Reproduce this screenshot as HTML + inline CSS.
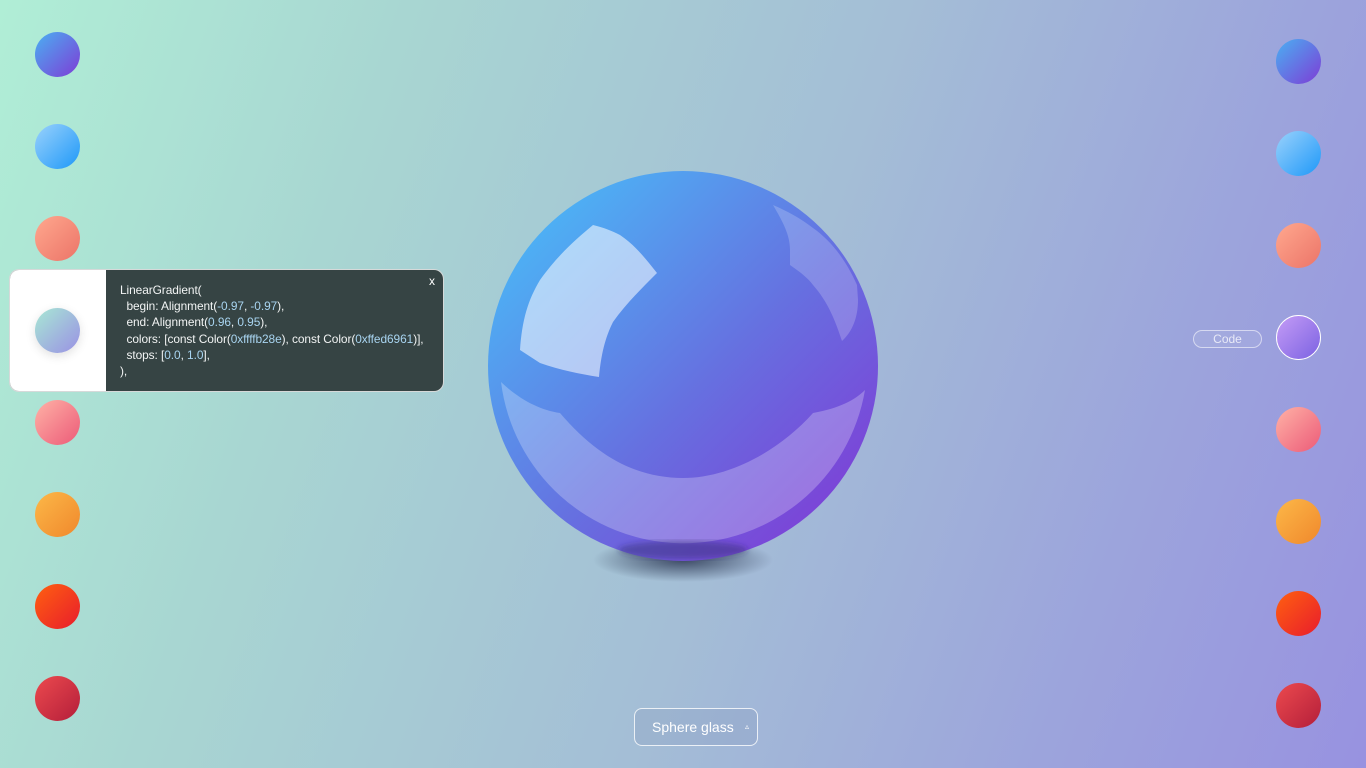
<!DOCTYPE html>
<html><head><meta charset="utf-8"><style>
html,body{margin:0;padding:0;}
body{width:1366px;height:768px;overflow:hidden;position:relative;font-family:"Liberation Sans","DejaVu Sans",sans-serif;
background:linear-gradient(110deg,#b0eed6 0%,#a8d6d2 25%,#a4bed6 55%,#9ca4dc 80%,#9892e0 100%);}
.c{position:absolute;width:45px;height:45px;border-radius:50%;}
.g1{background:linear-gradient(135deg,#4ab0f2,#7e3cd6);}
.g2{background:linear-gradient(135deg,#9ad2fc,#1e98f8);}
.g3{background:linear-gradient(135deg,#ffa88e,#ec7468);}
.g4{background:linear-gradient(135deg,#a8e8d4,#9a90e4);}
.g5{background:linear-gradient(135deg,#ffb2a6,#ec5a78);}
.g6{background:linear-gradient(135deg,#fcb848,#f0882c);}
.g7{background:linear-gradient(135deg,#ff6010,#e81c2c);}
.g8{background:linear-gradient(135deg,#ec4a4e,#b41e3a);}
.g9{background:linear-gradient(135deg,#c49cf6,#7c62e2);}
.panel{position:absolute;left:9px;top:269px;width:435px;height:123px;border-radius:10px;overflow:hidden;background:#364444;border:1px solid rgba(255,255,255,.8);box-sizing:border-box;}
.panel .w{position:absolute;left:0;top:0;width:96px;height:100%;background:#fff;}
.code{position:absolute;left:110px;top:12px;color:#f2f4f4;font-size:11.9px;line-height:16.2px;white-space:pre;letter-spacing:-0.07px;}
.code b{font-weight:normal;color:#a8d4f0;}
.x{position:absolute;right:8px;top:4px;color:#fff;font-size:12px;}
</style></head><body>
<div class="c g1" style="left:35px;top:32px"></div>
<div class="c g2" style="left:35px;top:124px"></div>
<div class="c g3" style="left:35px;top:216px"></div>
<div class="c g5" style="left:35px;top:400px"></div>
<div class="c g6" style="left:35px;top:492px"></div>
<div class="c g7" style="left:35px;top:584px"></div>
<div class="c g8" style="left:35px;top:676px"></div>

<div class="panel"><div class="w"></div>
<div class="code">LinearGradient(
  begin: Alignment(<b>-0.97</b>, <b>-0.97</b>),
  end: Alignment(<b>0.96</b>, <b>0.95</b>),
  colors: [const Color(<b>0xffffb28e</b>), const Color(<b>0xffed6961</b>)],
  stops: [<b>0.0</b>, <b>1.0</b>],
),</div><div class="x">x</div></div>
<div class="c g4" style="left:35px;top:308px;box-shadow:0 3px 10px rgba(0,0,0,.12)"></div>

<div class="c g1" style="left:1276px;top:39px"></div>
<div class="c g2" style="left:1276px;top:131px"></div>
<div class="c g3" style="left:1276px;top:223px"></div>
<div class="c g9" style="left:1276px;top:315px;box-sizing:border-box;border:1.5px solid #fff"></div>
<div class="c g5" style="left:1276px;top:407px"></div>
<div class="c g6" style="left:1276px;top:499px"></div>
<div class="c g7" style="left:1276px;top:591px"></div>
<div class="c g8" style="left:1276px;top:683px"></div>

<div style="position:absolute;left:1193px;top:330px;width:69px;height:18px;box-sizing:border-box;border:1px solid rgba(255,255,255,.55);border-radius:9px;background:rgba(255,255,255,.08);color:rgba(255,255,255,.75);font-size:12px;text-align:center;line-height:16px">Code</div>

<svg style="position:absolute;left:0;top:0" width="1366" height="768">
<defs>
<linearGradient id="sp" x1="0" y1="0" x2="1" y2="1"><stop offset="0.1" stop-color="#4bb6f6"/><stop offset="0.55" stop-color="#6670e0"/><stop offset="1" stop-color="#8432d4"/></linearGradient>
<radialGradient id="sh" cx="0.5" cy="0.5" r="0.5"><stop offset="0" stop-color="#2a3550" stop-opacity=".85"/><stop offset="1" stop-color="#2a3550" stop-opacity="0"/></radialGradient>
<filter id="bl"><feGaussianBlur stdDeviation="3"/></filter>
</defs>
<ellipse cx="683" cy="560" rx="90" ry="22" fill="url(#sh)"/>
<circle cx="683" cy="366" r="195" fill="url(#sp)"/>
<path d="M501,382 C520,400 540,410 560,413 C600,460 640,478 683,478 C730,478 780,450 813,413 C840,408 855,400 865,390 A184 184 0 0 1 501,382 Z" fill="#fff" fill-opacity=".25"/>
<path d="M520,350 C522,320 528,300 540,280 C558,255 575,240 593,225 C605,228 612,231 620,235 C635,245 645,258 657,273 C640,290 625,305 613,322 C605,338 601,355 599,377 C580,374 560,370 540,363 Z" fill="#fff" fill-opacity=".55"/>
<path d="M773,205 C783,222 790,235 790,250 L790,265 C800,272 808,278 813,285 C828,302 835,320 842,341 C852,332 858,318 858,300 L857,285 C845,258 830,240 813,228 C800,218 787,211 773,205 Z" fill="#fff" fill-opacity=".2"/>
<ellipse cx="683" cy="550" rx="65" ry="9" fill="#2a2060" fill-opacity=".4" filter="url(#bl)"/>
</svg>

<div style="position:absolute;left:634px;top:708px;width:124px;height:38px;box-sizing:border-box;border:1px solid rgba(255,255,255,.8);border-radius:8px;background:rgba(120,140,180,.18);color:#fff;font-size:14px;line-height:36px;padding-left:17px">Sphere glass<span style="position:absolute;right:8px;top:0;font-size:8px">▵</span></div>
</body></html>
